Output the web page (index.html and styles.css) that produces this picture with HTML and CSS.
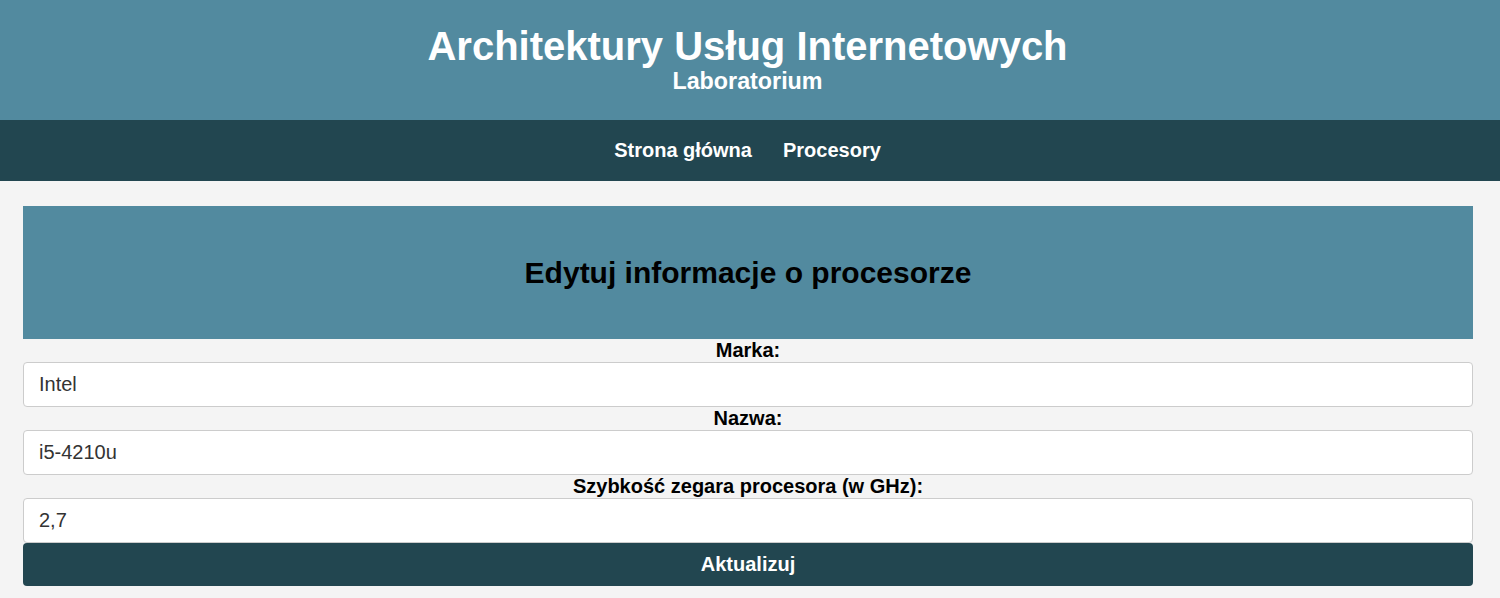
FILE: index.html
```html
<!DOCTYPE html>
<html lang="pl">
<head>
<meta charset="utf-8">
<title>Edytuj procesor</title>
<link rel="stylesheet" href="styles.css">
</head>
<body>
<header class="site-header">
  <h1 class="site-title">Architektury Usług Internetowych</h1>
  <p class="site-subtitle">Laboratorium</p>
</header>
<nav class="site-nav">
  <a href="#" class="nav-link">Strona główna</a>
  <a href="#" class="nav-link">Procesory</a>
</nav>
<main class="content">
  <section class="card-head">
    <h2 class="card-title">Edytuj informacje o procesorze</h2>
  </section>
  <form class="edit-form">
    <label class="field-label" for="marka">Marka:</label>
    <input class="field-input" id="marka" type="text" value="Intel">
    <label class="field-label" for="nazwa">Nazwa:</label>
    <input class="field-input" id="nazwa" type="text" value="i5-4210u">
    <label class="field-label" for="zegar">Szybkość zegara procesora (w GHz):</label>
    <input class="field-input" id="zegar" type="text" value="2,7">
    <button class="submit-btn" type="submit">Aktualizuj</button>
  </form>
</main>
</body>
</html>
```

FILE: styles.css
```css
* { box-sizing: border-box; }
html, body {
  margin: 0;
  padding: 0;
  background: #f4f4f4;
  font-family: "Liberation Sans", Arial, sans-serif;
}
.site-header {
  background: #528a9f;
  color: #fff;
  text-align: center;
  height: 120px;
  padding: 24px 5px 0 0;
}
.site-title {
  margin: 0;
  font-size: 40px;
  line-height: 44px;
  font-weight: bold;
}
.site-subtitle {
  margin: 0;
  font-size: 23.3px;
  line-height: 27px;
  font-weight: bold;
}
.site-nav {
  background: #224650;
  height: 61px;
  display: flex;
  justify-content: center;
  align-items: center;
  gap: 31px;
  padding-right: 5px;
}
.nav-link {
  color: #fff;
  text-decoration: none;
  font-weight: bold;
  font-size: 20px;
}
.content {
  width: 1450px;
  margin: 25px 0 0 23px;
}
.card-head {
  background: #528a9f;
  height: 133px;
  display: flex;
  align-items: center;
  justify-content: center;
}
.card-title {
  margin: 0;
  font-size: 30px;
  font-weight: bold;
  color: #000;
  padding-top: 1px;
}
.edit-form {
  display: flex;
  flex-direction: column;
}
.field-label {
  text-align: center;
  font-weight: bold;
  font-size: 20px;
  line-height: 23px;
  color: #000;
}
.field-input {
  height: 45px;
  width: 100%;
  border: 1px solid #ccc;
  border-radius: 4px;
  background: #fff;
  padding: 0 15px;
  font-family: "Liberation Sans", Arial, sans-serif;
  font-size: 20px;
  color: #333;
}
.submit-btn {
  height: 43px;
  width: 100%;
  border: none;
  border-radius: 4px;
  background: #224650;
  color: #fff;
  font-family: "Liberation Sans", Arial, sans-serif;
  font-size: 20px;
  font-weight: bold;
}
```
